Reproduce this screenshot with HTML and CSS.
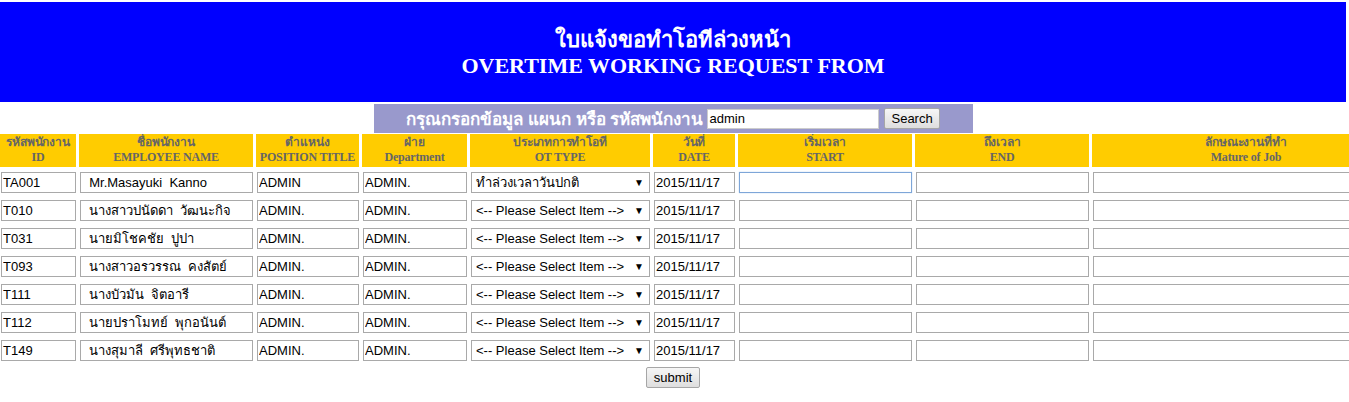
FILE: index.html
```html
<!DOCTYPE html>
<html lang="th">
<head>
  <meta charset="UTF-8" />
  <title>OVERTIME WORKING REQUEST FROM</title>
  <link rel="stylesheet" href="styles.css">
</head>
<body>

<div class="banner">
  <h1>ใบแจ้งขอทำโอทีล่วงหน้า<br>OVERTIME WORKING REQUEST FROM</h1>
</div>

<form class="ot-form">
  <div class="search-row">
    <div class="search">
      <span class="search-label">กรุณกรอกข้อมูล แผนก หรือ รหัสพนักงาน</span>
      <input type="text" class="search-input" value="admin">
      <button type="button" class="btn">Search</button>
    </div>
  </div>

  <table class="ot-table">
    <thead>
      <tr>
        <th class="c-id">รหัสพนักงาน<br>ID</th>
        <th class="c-name">ชื่อพนักงาน<br>EMPLOYEE NAME</th>
        <th class="c-pos">ตำแหน่ง<br>POSITION TITLE</th>
        <th class="c-dept">ฝ่าย<br>Department</th>
        <th class="c-type">ประเภทการทำโอที<br>OT TYPE</th>
        <th class="c-date">วันที่<br>DATE</th>
        <th class="c-time">เริ่มเวลา<br>START</th>
        <th class="c-time">ถึงเวลา<br>END</th>
        <th class="c-job">ลักษณะงานที่ทำ<br>Mature of Job</th>
      </tr>
    </thead>
    <tbody id="rows"></tbody>
  </table>

  <div class="actions">
    <button type="button" class="btn btn-submit">submit</button>
  </div>
</form>

<script>
  const staff = [
    { id: "TA001", name: "  Mr.Masayuki  Kanno", pos: "ADMIN", type: "ทำล่วงเวลาวันปกติ" },
    { id: "T010", name: "  นางสาวปนัดดา  วัฒนะกิจ", pos: "ADMIN." },
    { id: "T031", name: "  นายมิโชคชัย  ปูปา", pos: "ADMIN." },
    { id: "T093", name: "  นางสาวอรวรรณ  คงสัตย์", pos: "ADMIN." },
    { id: "T111", name: "  นางบัวมัน  จิตอารี", pos: "ADMIN." },
    { id: "T112", name: "  นายปราโมทย์  พุกอนันต์", pos: "ADMIN." },
    { id: "T149", name: "  นางสุมาลี  ศรีพุทธชาติ", pos: "ADMIN." }
  ];

  const tbody = document.getElementById("rows");

  staff.forEach((s, i) => {
    const tr = document.createElement("tr");
    tr.innerHTML = `
      <td><input type="text" class="field" value="${s.id}"></td>
      <td><input type="text" class="field" value="${s.name}"></td>
      <td><input type="text" class="field" value="${s.pos}"></td>
      <td><input type="text" class="field" value="ADMIN."></td>
      <td><div class="select">${s.type || "&lt;-- Please Select Item --&gt;"}</div></td>
      <td><input type="text" class="field" value="2015/11/17"></td>
      <td><input type="text" class="field${i === 0 ? " focused" : ""}"></td>
      <td><input type="text" class="field"></td>
      <td><input type="text" class="field"></td>`;
    tbody.appendChild(tr);
  });
</script>

</body>
</html>
```

FILE: styles.css
```css
body {
  margin: 0;
  padding-top: 2px;
  font-family: "Liberation Sans", Arial, sans-serif;
  background: #fff;
}

.banner {
  width: 1346px;
  height: 100px;
  background: #0000ff;
  display: flex;
  align-items: center;
  justify-content: center;
}

.banner h1 {
  margin: 0;
  padding-top: 2px;
  color: #fff;
  font-family: "Liberation Serif", "Times New Roman", serif;
  font-size: 22px;
  line-height: 26px;
  text-align: center;
}

.search-row {
  width: 1346px;
  display: flex;
  justify-content: center;
  margin-top: 2px;
}

.search {
  width: 599px;
  height: 29px;
  background: #9999cc;
  display: flex;
  align-items: center;
  justify-content: center;
  gap: 4px;
}

.search-label {
  color: #fff;
  font-weight: bold;
  font-size: 17px;
}

.search-input {
  width: 172px;
  height: 20px;
  box-sizing: border-box;
  border: 1px solid #ccc;
  padding: 0 1px;
  font-family: "Liberation Sans", Arial, sans-serif;
  font-size: 13px;
  margin-right: 1px;
}

.btn {
  height: 21px;
  padding: 0 6px;
  border: 1px solid #a6a6a6;
  border-radius: 2px;
  background: linear-gradient(#f6f6f6, #dedede);
  font-family: "Liberation Sans", Arial, sans-serif;
  font-size: 13px;
  color: #000;
}

.btn-submit {
  padding: 0 7px;
}

.ot-table {
  border-collapse: separate;
  border-spacing: 3px;
  margin: -2px -3px 0;
  table-layout: fixed;
  width: 1406px;
}

.c-id { width: 76px; }
.c-name { width: 174px; }
.c-pos { width: 103px; }
.c-dept { width: 105px; }
.c-type { width: 180px; }
.c-date { width: 82px; }
.c-time { width: 174px; }
.c-job { width: 308px; }

.ot-table th {
  background: #ffcc00;
  color: #666;
  font-family: "Liberation Serif", "Times New Roman", serif;
  font-size: 12px;
  letter-spacing: -0.2px;
  font-weight: bold;
  line-height: 15px;
  height: 33px;
  padding: 1px 0 2px;
  box-sizing: border-box;
  text-align: center;
  white-space: nowrap;
  overflow: hidden;
}

.ot-table td {
  padding: 2px 0 2px 1px;
  height: 25px;
  box-sizing: border-box;
}

.field {
  display: block;
  width: 100%;
  height: 21px;
  box-sizing: border-box;
  border: 1px solid #a9a9a9;
  padding: 0 1px;
  font-family: "Liberation Sans", Arial, sans-serif;
  font-size: 13px;
  color: #000;
  background: #fff;
  white-space: pre;
}

.field.focused {
  border-color: #7ea6d8;
  box-shadow: 0 0 1px #9ec0ea;
}

.select {
  position: relative;
  height: 21px;
  box-sizing: border-box;
  border: 1px solid #a9a9a9;
  padding: 0 4px;
  font-size: 13px;
  line-height: 19px;
  background: #fff;
  white-space: nowrap;
}

.select::after {
  content: "▼";
  position: absolute;
  right: 5px;
  top: 0;
  font-size: 10px;
}

.actions {
  width: 1346px;
  display: flex;
  justify-content: center;
  margin-top: 1px;
}
```
